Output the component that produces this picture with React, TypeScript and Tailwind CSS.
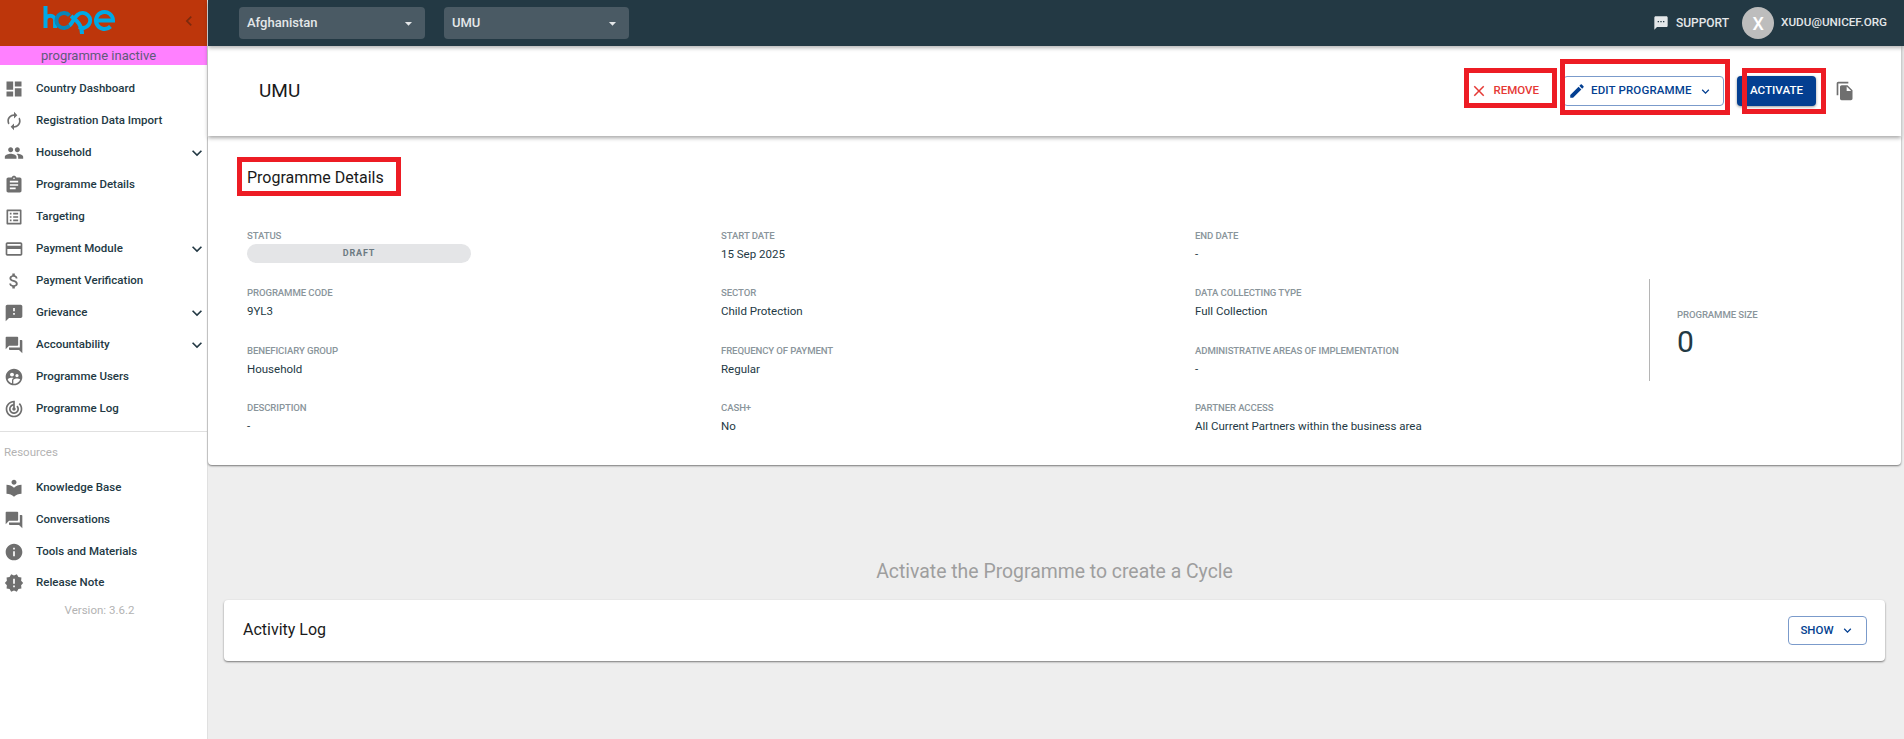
import React from "react";

const P = {
  dashboard: "M3 13h8V3H3v10zm0 8h8v-6H3v6zm10 0h8V11h-8v10zm0-18v6h8V3h-8z",
  autorenew: "M12 6v3l4-4-4-4v3c-4.42 0-8 3.58-8 8 0 1.57.46 3.03 1.24 4.26L6.7 14.8c-.45-.83-.7-1.79-.7-2.8 0-3.31 2.69-6 6-6zm6.76 1.74L17.3 9.2c.44.84.7 1.79.7 2.8 0 3.31-2.69 6-6 6v-3l-4 4 4 4v-3c4.42 0 8-3.58 8-8 0-1.57-.46-3.03-1.24-4.26z",
  people: "M16 11c1.66 0 2.99-1.34 2.99-3S17.66 5 16 5c-1.66 0-3 1.34-3 3s1.34 3 3 3zm-8 0c1.66 0 2.99-1.34 2.99-3S9.66 5 8 5C6.34 5 5 6.34 5 8s1.34 3 3 3zm0 2c-2.33 0-7 1.17-7 3.5V19h14v-2.5c0-2.33-4.67-3.5-7-3.5zm8 0c-.29 0-.62.02-.97.05 1.16.84 1.97 1.97 1.97 3.45V19h6v-2.5c0-2.33-4.67-3.5-7-3.5z",
  assignment: "M19 3h-4.18C14.4 1.84 13.3 1 12 1c-1.3 0-2.4.84-2.82 2H5c-1.1 0-2 .9-2 2v14c0 1.1.9 2 2 2h14c1.1 0 2-.9 2-2V5c0-1.1-.9-2-2-2zm-7 0c.55 0 1 .45 1 1s-.45 1-1 1-1-.45-1-1 .45-1 1-1zm2 14H7v-2h7v2zm3-4H7v-2h10v2zm0-4H7V7h10v2z",
  listAlt: "M19 5v14H5V5h14m1.1-2H3.9c-.5 0-.9.4-.9.9v16.2c0 .4.4.9.9.9h16.2c.4 0 .9-.5.9-.9V3.9c0-.5-.5-.9-.9-.9zM11 7h6v2h-6V7zm0 4h6v2h-6v-2zm0 4h6v2h-6zM7 7h2v2H7zm0 4h2v2H7zm0 4h2v2H7z",
  payment: "M20 4H4c-1.11 0-1.99.89-1.99 2L2 18c0 1.11.89 2 2 2h16c1.11 0 2-.89 2-2V6c0-1.11-.89-2-2-2zm0 14H4v-6h16v6zm0-10H4V6h16v2z",
  money: "M11.8 10.9c-2.27-.59-3-1.2-3-2.15 0-1.09 1.01-1.85 2.7-1.85 1.78 0 2.44.85 2.5 2.1h2.21c-.07-1.72-1.12-3.3-3.21-3.81V3h-3v2.16c-1.94.42-3.5 1.68-3.5 3.61 0 2.31 1.91 3.46 4.7 4.13 2.5.6 3 1.48 3 2.41 0 .69-.49 1.79-2.7 1.79-2.06 0-2.87-.92-2.98-2.1h-2.2c.12 2.19 1.76 3.42 3.68 3.83V21h3v-2.15c1.95-.37 3.5-1.5 3.5-3.55 0-2.84-2.43-3.81-4.7-4.4z",
  feedback: "M20 2H4c-1.1 0-1.99.9-1.99 2L2 22l4-4h14c1.1 0 2-.9 2-2V4c0-1.1-.9-2-2-2zm-7 12h-2v-2h2v2zm0-4h-2V6h2v4z",
  forum: "M21 6h-2v9H6v2c0 .55.45 1 1 1h11l4 4V7c0-.55-.45-1-1-1zm-4 6V3c0-.55-.45-1-1-1H3c-.55 0-1 .45-1 1v14l4-4h10c.55 0 1-.45 1-1z",
  users: "M11.99 2c-5.52 0-10 4.48-10 10s4.48 10 10 10 10-4.48 10-10-4.48-10-10-10zm3.61 6.34c1.07 0 1.93.86 1.93 1.93 0 1.07-.86 1.93-1.93 1.93-1.07 0-1.93-.86-1.93-1.93-.01-1.07.86-1.93 1.93-1.93zm-6-1.58c1.3 0 2.36 1.06 2.36 2.36 0 1.3-1.06 2.36-2.36 2.36s-2.36-1.06-2.36-2.36c0-1.31 1.05-2.36 2.36-2.36zm0 9.13v3.75c-2.4-.75-4.3-2.6-5.14-4.96 1.05-1.12 3.67-1.69 5.14-1.69.53 0 1.2.08 1.9.22-1.64.87-1.9 2.02-1.9 2.68zM11.99 20c-.27 0-.53-.01-.79-.04v-4.07c0-1.42 2.94-2.13 4.4-2.13 1.07 0 2.92.39 3.84 1.15-1.17 2.97-4.06 5.09-7.45 5.09z",
  track: "M19.07 4.93l-1.41 1.41C19.1 7.79 20 9.79 20 12c0 4.42-3.58 8-8 8s-8-3.58-8-8c0-4.08 3.05-7.44 7-7.93v2.02C8.16 6.57 6 9.03 6 12c0 3.31 2.69 6 6 6s6-2.69 6-6c0-1.66-.67-3.16-1.76-4.24l-1.41 1.41C15.55 9.9 16 10.9 16 12c0 2.21-1.79 4-4 4s-4-1.79-4-4c0-1.86 1.28-3.41 3-3.86v2.14c-.6.35-1 .98-1 1.72 0 1.1.9 2 2 2s2-.9 2-2c0-.74-.4-1.38-1-1.72V2h-1C6.48 2 2 6.48 2 12s4.48 10 10 10 10-4.48 10-10c0-2.76-1.12-5.26-2.93-7.07z",
  library: "M12 11.55C9.64 9.35 6.48 8 3 8v11c3.48 0 6.64 1.35 9 3.55 2.36-2.19 5.52-3.55 9-3.55V8c-3.48 0-6.64 1.35-9 3.55zM12 8c1.66 0 3-1.34 3-3s-1.34-3-3-3-3 1.34-3 3 1.34 3 3 3z",
  info: "M12 2C6.48 2 2 6.48 2 12s4.48 10 10 10 10-4.48 10-10S17.52 2 12 2zm1 15h-2v-6h2v6zm0-8h-2V7h2v2z",
  release: "M23 12l-2.44-2.78.34-3.68-3.61-.82-1.89-3.18L12 3 8.6 1.54 6.71 4.72l-3.61.81.34 3.68L1 12l2.44 2.78-.34 3.69 3.61.82 1.89 3.18L12 21l3.4 1.46 1.89-3.18 3.61-.82-.34-3.68L23 12zm-10 5h-2v-2h2v2zm0-4h-2V7h2v6z",
  expand: "M16.59 8.59L12 13.17 7.41 8.59 6 10l6 6 6-6z",
  left: "M15.41 7.41L14 6l-6 6 6 6 1.41-1.41L10.83 12z",
  drop: "M7 10l5 5 5-5z",
  sms: "M20 2H4c-1.1 0-1.99.9-1.99 2L2 22l4-4h14c1.1 0 2-.9 2-2V4c0-1.1-.9-2-2-2zM9 11H7V9h2v2zm4 0h-2V9h2v2zm4 0h-2V9h2v2z",
  close: "M19 6.41L17.59 5 12 10.59 6.41 5 5 6.41 10.59 12 5 17.59 6.41 19 12 13.41 17.59 19 19 17.59 13.41 12z",
  edit: "M3 17.25V21h3.75L17.81 9.94l-3.75-3.75L3 17.25zM20.71 7.04c.39-.39.39-1.02 0-1.41l-2.34-2.34c-.39-.39-1.02-.39-1.41 0l-1.83 1.83 3.75 3.75 1.83-1.83z",
  copy: "M16 1H4c-1.1 0-2 .9-2 2v14h2V3h12V1zm-1 4l6 6v10c0 1.1-.9 2-2 2H7.99C6.89 23 6 22.1 6 21l.01-14c0-1.1.89-2 1.99-2h7zm-1 7h5.5L14 6.5V12z",
};

function Icon({ d, className }: { d: string; className?: string }) {
  return (
    <svg viewBox="0 0 24 24" fill="currentColor" className={className}>
      <path d={d} />
    </svg>
  );
}

function Logo() {
  return (
    <svg viewBox="0 0 73 28" width="73" height="28" fill="none" stroke="#00a9e6" strokeWidth="4">
      <path d="M2.500 22V0M2.500 14.500a4.800 4.800 0 0 1 9.600 0V22" />
      <path d="M26.500 9.500A7.500 7.500 0 1 0 26.500 19.500" stroke="#0a86b8" />
      <path d="M26.500 19.500C30 17 31 11 35 8.500A7.500 7.500 0 1 1 36 21" />
      <path d="M28 10C33 14 39 18 39 28" />
      <path d="M53 14.500h17a8.500 8.500 0 1 0-2.500 6" />
    </svg>
  );
}

function NavItem({ icon, label, more, short }: { icon: string; label: string; more?: boolean; short?: boolean }) {
  return (
    <div className={`flex items-center pl-[4px] ${short ? "h-[31px]" : "h-8"}`}>
      <Icon d={icon} className="h-5 w-5 text-[#6f6f6f]" />
      <span className="ml-[12px] flex-1 text-[11.5px] font-medium text-[#233944]">{label}</span>
      {more && <Icon d={P.expand} className="h-5 w-5 text-[#233944]" />}
    </div>
  );
}

function Label({ children }: { children: React.ReactNode }) {
  return <div className="text-[9.6px] leading-[13px] tracking-[-0.1px] font-medium text-[#8a959b]">{children}</div>;
}

function Field({ label, value }: { label: string; value: string }) {
  return (
    <div>
      <Label>{label}</Label>
      <div className="mt-[3px] text-[11.5px] leading-[18px] text-[#233944]">{value}</div>
    </div>
  );
}

function RedBox({ className }: { className: string }) {
  return <div className={`pointer-events-none absolute z-30 border-[5px] border-[#ed1c24] ${className}`} />;
}

export default function App() {
  return (
    <div className="relative flex h-[739px] w-[1904px] overflow-hidden bg-[#eeeeee] font-['Roboto',sans-serif]">
      <aside className="flex w-[208px] shrink-0 flex-col border-r border-[#e0e0e0] bg-white">
        <div className="relative flex h-[46px] items-start bg-[#bd360b] pl-[43px] pt-[6px]">
          <Logo />
          <Icon d={P.left} className="absolute left-[179px] top-[11px] h-5 w-5 text-[#7c2a0e]" />
        </div>
        <div className="h-[19px] bg-[#ff80ff] pr-[10px] text-center text-[13px] leading-[19px] text-[#5e5a7a]">programme inactive</div>
        <nav className="mt-[8px]">
          <NavItem icon={P.dashboard} label="Country Dashboard" />
          <NavItem icon={P.autorenew} label="Registration Data Import" />
          <NavItem icon={P.people} label="Household" more />
          <NavItem icon={P.assignment} label="Programme Details" />
          <NavItem icon={P.listAlt} label="Targeting" />
          <NavItem icon={P.payment} label="Payment Module" more />
          <NavItem icon={P.money} label="Payment Verification" />
          <NavItem icon={P.feedback} label="Grievance" more />
          <NavItem icon={P.forum} label="Accountability" more />
          <NavItem icon={P.users} label="Programme Users" />
          <NavItem icon={P.track} label="Programme Log" />
        </nav>
        <div className="mt-[6px] border-t border-[#e0e0e0] pl-1 pt-[12px] text-[11.5px] leading-[16px] text-[#b3b3b3]">Resources</div>
        <div className="mt-[12px]">
          <NavItem icon={P.library} label="Knowledge Base" />
          <NavItem icon={P.forum} label="Conversations" />
          <NavItem icon={P.info} label="Tools and Materials" short />
          <NavItem icon={P.release} label="Release Note" short />
        </div>
        <div className="mt-[4px] pr-[8px] text-center text-[11.5px] leading-[16px] text-[#b3b3b3]">Version: 3.6.2</div>
      </aside>

      <div className="flex min-w-0 flex-1 flex-col">
        <header className="relative z-20 flex h-[46px] shrink-0 items-center bg-[#233944] pl-[31px] pr-[17px] text-white shadow-[0_2px_4px_rgba(0,0,0,0.3)]">
          <div className="flex h-[32px] w-[186px] items-center justify-between rounded bg-[#4a5a64] pl-2 pr-2 text-[13px] font-medium text-[#e4e7e9]">
            Afghanistan
            <Icon d={P.drop} className="h-[17px] w-[17px] text-[#e4e7e9]" />
          </div>
          <div className="ml-[19px] flex h-[32px] w-[185px] items-center justify-between rounded bg-[#4a5a64] pl-2 pr-2 text-[13px] font-medium text-[#e4e7e9]">
            UMU
            <Icon d={P.drop} className="h-[17px] w-[17px] text-[#e4e7e9]" />
          </div>
          <div className="ml-auto flex items-center text-[12px] font-medium text-[#e4e7e9]">
            <Icon d={P.sms} className="h-4 w-4" />
            <span className="ml-[7px]">SUPPORT</span>
            <div className="ml-[13px] flex h-8 w-8 items-center justify-center rounded-full bg-[#bdbdbd] text-[18px] font-medium text-white">X</div>
            <span className="ml-[7px] text-[11.7px]">XUDU@UNICEF.ORG</span>
          </div>
        </header>

        <main className="mr-[3px] flex min-h-0 flex-1 flex-col">
          <section className="relative z-10 flex h-[90px] items-center bg-white pl-[51px] pr-[46px] shadow-[0_2px_4px_rgba(0,0,0,0.35)]">
            <h1 className="text-[19px] text-[#1a1a1a]">UMU</h1>
            <div className="ml-auto flex items-center">
              <div className="flex items-center text-[11.5px] font-medium text-[#e53935]">
                <Icon d={P.close} className="h-[18px] w-[18px]" />
                <span className="ml-[5px]">REMOVE</span>
              </div>
              <div className="ml-[24px] flex h-[30px] w-[161px] items-center whitespace-nowrap rounded border border-[#7b9bcb] pl-[4px] text-[11.5px] font-medium tracking-[0.15px] text-[#033f91]">
                <Icon d={P.edit} className="h-[18px] w-[18px]" />
                <span className="ml-[5px]">EDIT PROGRAMME</span>
                <Icon d={P.expand} className="ml-[6px] h-[15px] w-[15px]" />
              </div>
              <div className="ml-[13px] flex h-[30px] w-[79px] items-center justify-center rounded bg-[#033f91] text-[11.6px] font-medium text-white shadow-[0_1px_3px_rgba(0,0,0,0.4)]">ACTIVATE</div>
              <Icon d={P.copy} className="ml-[19px] h-5 w-5 text-[#6f6f6f]" />
            </div>
          </section>

          <section className="relative h-[329px] rounded-b bg-white pl-[39px] shadow-[0_1px_2px_rgba(0,0,0,0.5)]">
            <h2 className="pt-[30px] text-[16px] leading-[24px] text-[#1a1a1a]">Programme Details</h2>
            <div className="mt-[39px] flex">
              <div className="grid w-[1422px] grid-cols-3 gap-y-[23.4px]">
                <div>
                  <Label>STATUS</Label>
                  <div className="mt-[2px] flex h-[19px] w-[224px] items-center justify-center rounded-full bg-[#e4e5e7] text-[9px] font-bold tracking-[0.8px] text-[#6c7a82]">DRAFT</div>
                </div>
                <Field label="START DATE" value="15 Sep 2025" />
                <Field label="END DATE" value="-" />
                <Field label="PROGRAMME CODE" value="9YL3" />
                <Field label="SECTOR" value="Child Protection" />
                <Field label="DATA COLLECTING TYPE" value="Full Collection" />
                <Field label="BENEFICIARY GROUP" value="Household" />
                <Field label="FREQUENCY OF PAYMENT" value="Regular" />
                <Field label="ADMINISTRATIVE AREAS OF IMPLEMENTATION" value="-" />
                <Field label="DESCRIPTION" value="-" />
                <Field label="CASH+" value="No" />
                <Field label="PARTNER ACCESS" value="All Current Partners within the business area" />
              </div>
              <div className="-ml-[20px] mt-[50px] flex h-[102px] border-l border-[#b5b5b5] pl-[27px]">
                <div className="pt-[29px]">
                  <Label>PROGRAMME SIZE</Label>
                  <div className="mt-[1px] text-[30px] leading-[40px] text-[#233944]">0</div>
                </div>
              </div>
            </div>
          </section>

          <div className="mt-[93px] text-center text-[19.4px] leading-[28px] text-[#9e9e9e]">Activate the Programme to create a Cycle</div>

          <section className="mx-4 mt-[14px] flex h-[61px] items-center justify-between rounded bg-white pl-[19px] pr-[18px] shadow-[0_1px_2px_rgba(0,0,0,0.5)]">
            <h3 className="pb-[2px] text-[16px] text-[#1a1a1a]">Activity Log</h3>
            <div className="flex h-[29px] w-[79px] items-center justify-center rounded border border-[#7b9bcb] text-[11.5px] font-medium text-[#033f91]">
              SHOW
              <Icon d={P.expand} className="ml-[6px] h-[15px] w-[15px]" />
            </div>
          </section>
        </main>
      </div>

      <RedBox className="left-[1464px] top-[68px] h-[40px] w-[93px]" />
      <RedBox className="left-[1560px] top-[59px] h-[56px] w-[170px]" />
      <RedBox className="left-[1742px] top-[68px] h-[46px] w-[84px]" />
      <RedBox className="left-[237px] top-[157px] h-[39px] w-[164px]" />
    </div>
  );
}
